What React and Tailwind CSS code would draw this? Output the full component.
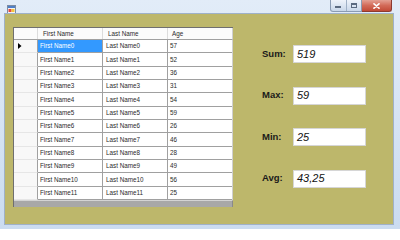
import React from 'react';

const ages = [57, 52, 36, 31, 54, 59, 26, 46, 28, 49, 56, 25];

const rows = ages.map((age, i) => ({
    first: `First Name${i}`,
    last: `Last Name${i}`,
    age,
}));

const stats = [
    { label: 'Sum:', value: '519' },
    { label: 'Max:', value: '59' },
    { label: 'Min:', value: '25' },
    { label: 'Avg:', value: '43,25' },
];

const AppIcon = () => (
    <svg width="9" height="9" viewBox="0 0 9 9">
        <rect x="0.5" y="0.5" width="8" height="8" fill="#f4f4f4" stroke="#7d8ca3" strokeWidth="1" />
        <rect x="1" y="1" width="7" height="2" fill="#4f7fc6" />
        <rect x="1.5" y="4" width="3" height="3" fill="#e8473b" />
        <rect x="4.5" y="4" width="3" height="3" fill="#f3c43a" />
    </svg>
);

const TitleBar = () => (
    <div className="h-[13px] flex items-start">
        <div className="ml-[7px] mt-[5px]">
            <AppIcon />
        </div>
        <div className="ml-auto mr-[8px] flex">
            {/* min / max */}
            <div className="w-[32px] h-[12px] flex rounded-bl-[3px] border border-t-0 border-[#8a9bb3] bg-gradient-to-b from-[#eef3fa] to-[#c9d7ea]">
                <div className="flex-1 flex items-center justify-center border-r border-[#9fb0c6]">
                    <div className="w-[6px] h-[2px] mt-[3px] bg-[#5b6a80]" />
                </div>
                <div className="flex-1 flex items-center justify-center">
                    <div className="w-[6px] h-[5px] border border-[#5b6a80] border-t-2" />
                </div>
            </div>
            {/* close */}
            <div className="w-[30px] h-[12px] flex items-center justify-center rounded-br-[3px] border border-t-0 border-l-0 border-[#8c3a30] bg-gradient-to-b from-[#e3a093] via-[#d26a58] to-[#c24a36]">
                <svg width="7" height="6" viewBox="0 0 7 6">
                    <path d="M1 0.8 L6 5.2 M6 0.8 L1 5.2" stroke="#ffffff" strokeWidth="1.6" strokeLinecap="round" />
                </svg>
            </div>
        </div>
    </div>
);

const Grid = () => (
    <div className="w-[220px] flex flex-col border-l border-t border-[#6f6f6f] bg-[#ababab] text-[6.3px] text-[#2a2a2a]">
        {/* header */}
        <div className="grid grid-cols-[24px_65px_65px_64px] h-[12px] bg-[#fbfbfb] border-b border-[#a0a0a0] border-r border-r-[#d0d0d0]">
            <div className="border-r border-[#dcdcdc]" />
            <div className="flex items-center pl-[5px] border-r border-[#dcdcdc]">First Name</div>
            <div className="flex items-center pl-[5px] border-r border-[#dcdcdc]">Last Name</div>
            <div className="flex items-center pl-[4px]">Age</div>
        </div>
        {rows.map((r, i) => (
            <div key={r.first} className="grid grid-cols-[24px_65px_65px_64px] h-[13.333px] bg-white border-r border-[#d0d0d0]">
                <div className="flex items-center pl-[4px] bg-[#f8f8f8] border-r border-b border-[#e6e6e6] border-r-[#a0a0a0]">
                    {i === 0 && (
                        <svg width="4" height="6" viewBox="0 0 4 6">
                            <path d="M0 0 L3.5 3 L0 6 Z" fill="#000" />
                        </svg>
                    )}
                </div>
                <div className={`flex items-center pl-[2px] border-r border-b border-[#a0a0a0] ${i === 0 ? 'bg-[#3399ff] text-white' : ''}`}>
                    {r.first}
                </div>
                <div className="flex items-center pl-[3px] border-r border-b border-[#a0a0a0]">{r.last}</div>
                <div className="flex items-center pl-[2px] border-b border-[#a0a0a0]">{r.age}</div>
            </div>
        ))}
        {/* empty area */}
        <div className="h-[7px] bg-[#a8a8a8] border-t border-[#d4d4d4] border-r border-r-[#8a8a8a]" />
    </div>
);

const StatsPanel = () => (
    <div className="ml-[29px] mt-[31px] flex flex-col gap-[23.5px]">
        {stats.map(s => (
            <div key={s.label} className="flex items-center h-[18px]">
                <div className="w-[31px] text-[9.5px] font-bold text-[#1a1a1a]">{s.label}</div>
                <div className="w-[73px] h-[18px] flex items-center pl-[3px] bg-white border border-[#d6d6d6] text-[11px] italic text-[#111]">
                    {s.value}
                </div>
            </div>
        ))}
    </div>
);

export default function App() {
    return (
        <div className="w-[400px] h-[229px] flex flex-col overflow-hidden bg-gradient-to-b from-[#e2ecf8] to-[#cbdcf0] font-['Liberation_Sans',Arial,sans-serif]">
            <TitleBar />
            <div className="flex-1 ml-[4px] mr-[6px] mb-[4px] border border-[#9fb1c8]">
                <div className="w-full h-full flex items-start bg-[#bdb76b]">
                    <div className="ml-[8px] mt-[13px]">
                        <Grid />
                    </div>
                    <StatsPanel />
                </div>
            </div>
        </div>
    );
}
